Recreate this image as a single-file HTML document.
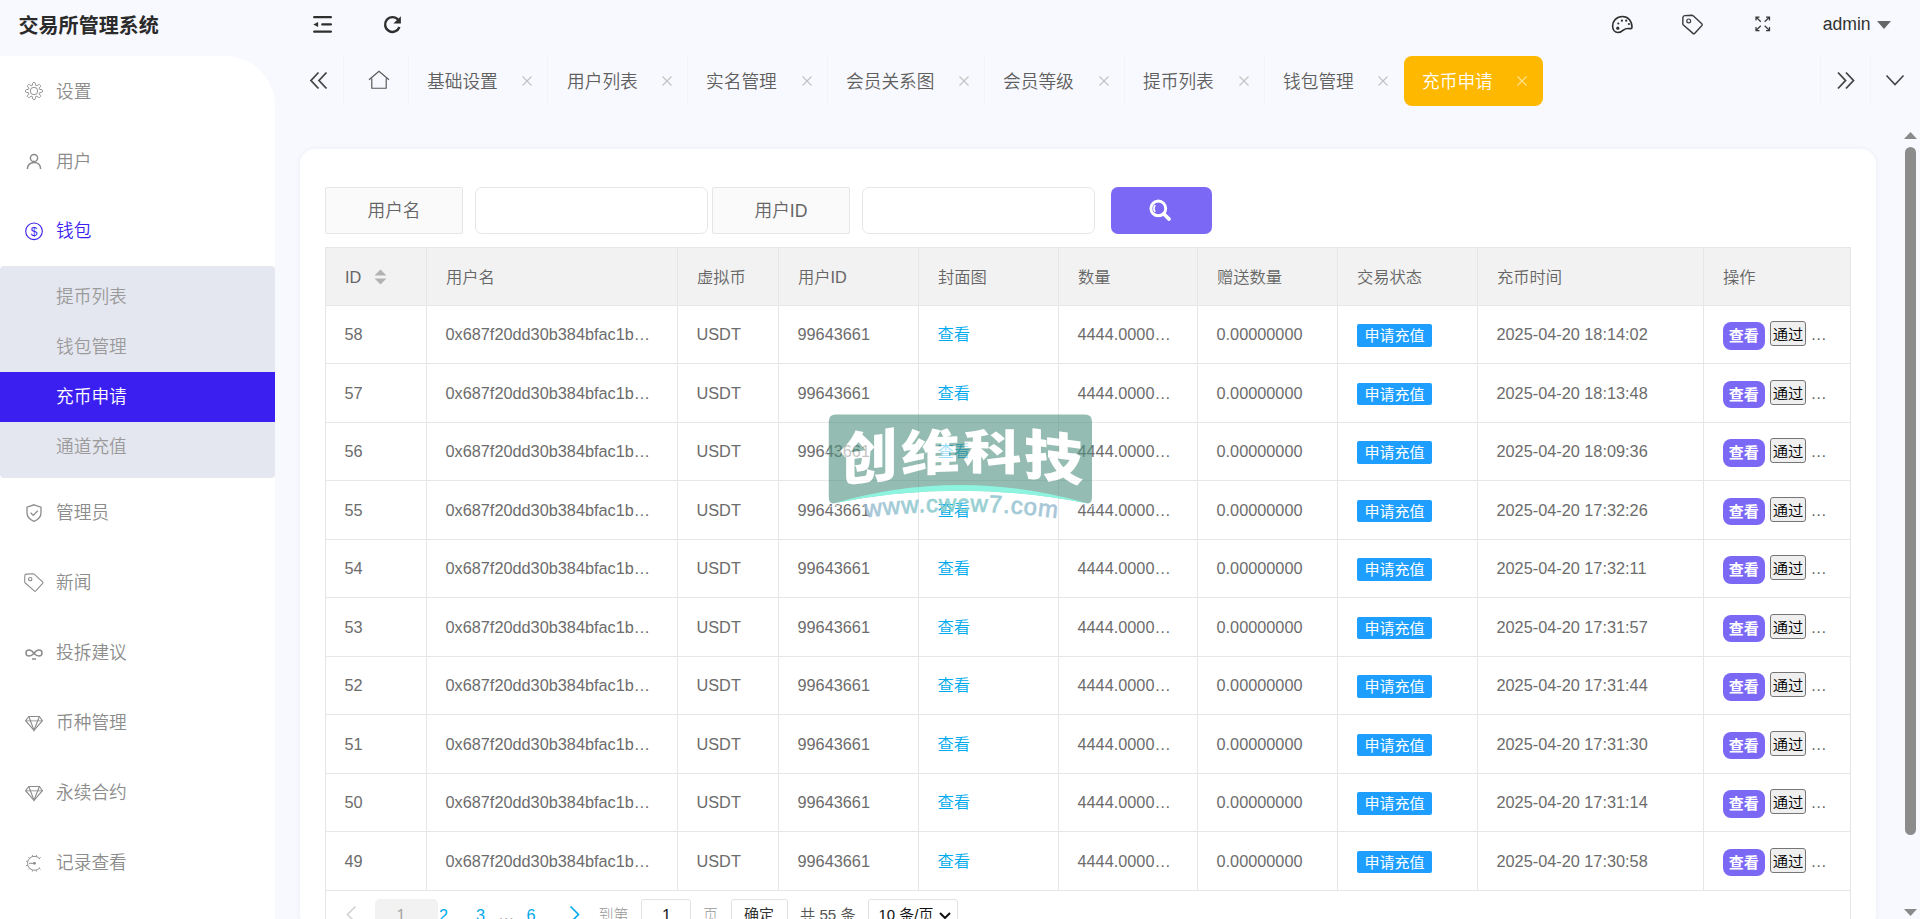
<!DOCTYPE html>
<html lang="zh-CN"><head><meta charset="utf-8"><title>交易所管理系统</title>
<style>
*{box-sizing:border-box;margin:0;padding:0}
html,body{width:1920px;height:919px;overflow:hidden}
body{background:#f8f9fe;font-family:"Liberation Sans","Noto Sans CJK SC",sans-serif;color:#666;position:relative;font-weight:350}
.abs{position:absolute}
.logo{position:absolute;left:18.5px;top:11.5px;font-size:20px;font-weight:700;color:#2b2b2b;line-height:28px;white-space:nowrap;letter-spacing:.05px}
.side{position:absolute;left:0;top:56px;width:275px;height:863px;background:#fff;border-top-right-radius:50px}
.mi{position:absolute;left:56px;font-size:17.7px;line-height:26px;color:#8c8c8c;white-space:nowrap}
.mi.on{color:#3b1ff0}
.ico{position:absolute;left:24px;width:20px;height:20px}
.sub{position:absolute;left:0;top:266px;width:275px;height:212px;background:#e5e7f0;border-radius:4px}
.sub .act{position:absolute;left:0;top:106px;width:275px;height:50px;background:#3b1ff0}
.si{position:absolute;left:56px;font-size:17.7px;line-height:26px;color:#9a9a9a;white-space:nowrap}
.si.on{color:#fff}
.hicon{position:absolute}
.tsep{position:absolute;top:56px;width:1px;height:50px;background:#f3f4f9}
.tab{position:absolute;top:69px;font-size:17.7px;line-height:26px;color:#5f5f5f;white-space:nowrap}
.tx{position:absolute;top:76px;width:10px;height:10px}
.tabon{position:absolute;left:1404px;top:56px;width:139px;height:50px;background:#ffb800;border-radius:8px}
.admin{position:absolute;left:1822.7px;top:11px;font-size:17.6px;line-height:26px;color:#333;font-weight:400}
.card{position:absolute;left:300px;top:149px;width:1576px;height:780px;background:#fff;border-radius:15px;box-shadow:0 0 5px rgba(110,110,170,.09)}
.flabel{position:absolute;top:187px;height:47px;width:138px;background:#fafafa;border:1px solid #e6e6e6;border-radius:2px;font-size:17.7px;line-height:47px;text-align:center;color:#666}
.finput{position:absolute;top:187px;height:47px;width:233px;background:#fff;border:1px solid #e6e6e6;border-radius:7px}
.fbtn{position:absolute;left:1111px;top:187px;width:101px;height:47px;background:#7b69f5;border-radius:7px}
.tbl .thead{position:absolute;left:325px;top:247px;width:1526px;height:59px;background:#f2f2f2}
.vl{position:absolute;top:247px;width:1px;height:644px;background:#e6e6e6}
.hl{position:absolute;left:325px;width:1526px;height:1px;background:#e6e6e6}
.th{position:absolute;top:263px;font-size:16.3px;line-height:28px;color:#666;white-space:nowrap}
.sort{position:absolute;left:373.5px;top:268.5px}
.td{position:absolute;font-size:16.3px;line-height:28px;height:28px;color:#6c6c6c;white-space:nowrap;font-weight:400}
.lk{color:#01aaed;font-weight:350}
.badge{position:absolute;width:75px;height:22.5px;background:#1e9fff;color:#fff;font-size:15px;line-height:23px;text-align:center;border-radius:2px;font-weight:400}
.vbtn{position:absolute;width:42.5px;height:27.4px;background:#7b69f5;color:#fff;font-size:15px;line-height:28px;text-align:center;border-radius:8px;font-weight:700}
.nbtn{position:absolute;width:36px;height:25px;background:#efefef;border:1px solid #767676;border-radius:3px;color:#000;font-size:15.3px;line-height:25px;text-align:center;font-weight:350}
.dots{position:absolute;font-size:16.3px;line-height:28px;color:#666}
.pg{position:absolute;font-size:16.3px;line-height:28px;white-space:nowrap;font-weight:400}

</style></head><body>
<div class="logo">交易所管理系统</div>
<div class="side"></div>
<div class="sub"><div class="act"></div></div>

<!-- sidebar items -->
<svg class="ico" style="top:81px" viewBox="0 0 20 20" fill="none" stroke="#8c8c8c" stroke-width=".95" stroke-linejoin="round"><circle cx="10" cy="10" r="3.700"/><path d="M8.42 4.31L8.54 2.49L9.04 1.60L10.96 1.60L11.46 2.49L11.58 4.31L12.91 4.86L14.28 3.66L15.26 3.39L16.61 4.74L16.34 5.72L15.14 7.09L15.69 8.42L17.51 8.54L18.40 9.04L18.40 10.96L17.51 11.46L15.69 11.58L15.14 12.91L16.34 14.28L16.61 15.26L15.26 16.61L14.28 16.34L12.91 15.14L11.58 15.69L11.46 17.51L10.96 18.40L9.04 18.40L8.54 17.51L8.42 15.69L7.09 15.14L5.72 16.34L4.74 16.61L3.39 15.26L3.66 14.28L4.86 12.91L4.31 11.58L2.49 11.46L1.60 10.96L1.60 9.04L2.49 8.54L4.31 8.42L4.86 7.09L3.66 5.72L3.39 4.74L4.74 3.39L5.72 3.66L7.09 4.86Z"/></svg>
<div class="mi" style="top:79px">设置</div>
<svg class="ico" style="top:151px" viewBox="0 0 20 20" fill="none" stroke="#8c8c8c" stroke-width="1.5"><circle cx="10" cy="7" r="3.6"/><path d="M3.400 18c0-4.200 3-6.600 6.600-6.600s6.600 2.400 6.600 6.600"/></svg>
<div class="mi" style="top:149px">用户</div>
<svg class="ico" style="top:221px" viewBox="0 0 20 20" fill="none" stroke="#3b1ff0" stroke-width="1.1"><circle cx="10" cy="10.300" r="8.300"/><text x="10" y="14.800" font-size="12" text-anchor="middle" fill="#3b1ff0" stroke="none" font-family="Liberation Sans, sans-serif">$</text></svg>
<div class="mi on" style="top:218px">钱包</div>

<div class="si" style="top:284px">提币列表</div>
<div class="si" style="top:334px">钱包管理</div>
<div class="si on" style="top:384px">充币申请</div>
<div class="si" style="top:434px">通道充值</div>

<svg class="ico" style="top:503px" viewBox="0 0 20 20" fill="none" stroke="#8c8c8c" stroke-width="1.300"><path d="M10 1.800l7 2.400v5.600c0 4.200-3 7-7 8.600-4-1.600-7-4.400-7-8.600V4.200z"/><path d="M6.600 9.800l2.600 2.600 4.600-4.600"/></svg>
<div class="mi" style="top:500px">管理员</div>
<svg class="ico" style="top:573px" viewBox="0 0 20 20" fill="none" stroke="#8c8c8c" stroke-width="1.150"><g transform="translate(-1 -1.300) scale(.94)"><path d="M3.800 2.600L10.800 2.200Q11.600 2.200 12.200 2.800L20.800 10.800Q21.600 11.600 20.900 12.500L13.600 20.400Q12.800 21.200 12 20.400L2.400 12Q1.800 11.500 1.800 10.700L1.900 4.400Q2 2.700 3.800 2.600Z" stroke-linejoin="round"/><circle cx="7.700" cy="7.900" r="1.800"/></g></svg>
<div class="mi" style="top:570px">新闻</div>
<svg class="ico" style="top:643px" viewBox="0 0 20 20" fill="none" stroke="#8c8c8c" stroke-width="1.500"><path d="M10 10.500c-1.500-2.500-3-3.500-5-3.500a3 3 0 0 0 0 6c2 0 3.500-1 5-2.500zm0 0c1.500-2.500 3-3.500 5-3.500a3 3 0 0 1 0 6c-2 0-3.500-1-5-2.500z"/><path d="M8 16h4"/></svg>
<div class="mi" style="top:640px">投拆建议</div>
<svg class="ico" style="top:713px" viewBox="0 0 20 20" fill="none" stroke="#8c8c8c" stroke-width="1.100"><path d="M4.800 3.500h10.600l3 4.200-8.400 9.600L1.600 7.700z"/><path d="M1.600 7.700h16.800" stroke-opacity=".55" stroke-width="1.600"/><path d="M4.800 3.500l5.200 13.800 5.400-13.800"/></svg>
<div class="mi" style="top:710px">币种管理</div>
<svg class="ico" style="top:783px" viewBox="0 0 20 20" fill="none" stroke="#8c8c8c" stroke-width="1.100"><path d="M4.800 3.500h10.600l3 4.200-8.400 9.600L1.600 7.700z"/><path d="M1.600 7.700h16.800" stroke-opacity=".55" stroke-width="1.600"/><path d="M4.800 3.500l5.200 13.800 5.400-13.800"/></svg>
<div class="mi" style="top:780px">永续合约</div>
<svg class="ico" style="top:853px" viewBox="0 0 20 20" fill="none" stroke="#8c8c8c" stroke-width="1"><path d="M16.02 14.61A7.0 7.0 0 1 1 16.02 5.99"/><path d="M15.66 15.46L16.65 16.45M12.39 17.35L12.75 18.70M8.61 17.35L8.25 18.70M5.34 15.46L4.35 16.45M3.45 12.19L2.10 12.55M3.45 8.41L2.10 8.05M5.34 5.14L4.35 4.15M8.61 3.25L8.25 1.90M12.39 3.25L12.75 1.90M15.66 5.14L16.65 4.15" stroke-width=".9"/><circle cx="10.500" cy="10.300" r="1.400" fill="#8c8c8c" stroke="none"/><path d="M5 10.300h5.500"/></svg>
<div class="mi" style="top:850px">记录查看</div>

<!-- header icons -->
<svg class="hicon" style="left:312px;top:15px" width="21" height="19" viewBox="0 0 21 19"><path d="M2.200 2.200h16.700M10.300 9.450h8.600M2.200 16.700h16.700" stroke="#2f2f2f" stroke-width="2.300" stroke-linecap="round" fill="none"/><path d="M6.100 6.900v5.100L1.300 9.450z" fill="#2f2f2f"/></svg>
<svg class="hicon" style="left:383px;top:15px" width="20" height="19" viewBox="0 0 20 19"><path d="M15.170 4.740A7.400 7.400 0 1 0 16.450 12.030" fill="none" stroke="#2f2f2f" stroke-width="2.400"/><path d="M17.900 1.250v7.150h-7.500z" fill="#2f2f2f"/></svg>

<!-- tabs -->
<i class="tsep" style="left:343px"></i><i class="tsep" style="left:408px"></i>
<i class="tsep" style="left:547px"></i><i class="tsep" style="left:687px"></i><i class="tsep" style="left:827px"></i><i class="tsep" style="left:984px"></i><i class="tsep" style="left:1124px"></i><i class="tsep" style="left:1264px"></i>
<i class="tsep" style="left:1820px"></i><i class="tsep" style="left:1870px"></i>
<svg class="hicon" style="left:309px;top:71px" width="20" height="19" viewBox="0 0 20 19"><path d="M9.500 1.500L2 9.500l7.500 8M17.500 1.500L10 9.500l7.500 8" fill="none" stroke="#444" stroke-width="1.800"/></svg>
<svg class="hicon" style="left:368px;top:70px" width="22" height="20" viewBox="0 0 22 20"><path d="M1 9.800L11 1.200l10 8.600M3.800 8.600v9.600h14.400V8.600" fill="none" stroke="#555" stroke-width="1.150"/></svg>
<div class="tabon"></div>
<div class="tab" style="left:427px">基础设置</div>
<div class="tab" style="left:567px">用户列表</div>
<div class="tab" style="left:706px">实名管理</div>
<div class="tab" style="left:846px">会员关系图</div>
<div class="tab" style="left:1003px">会员等级</div>
<div class="tab" style="left:1143px">提币列表</div>
<div class="tab" style="left:1283px">钱包管理</div>
<div class="tab" style="left:1422px;color:#fff">充币申请</div>
<svg class="tx" style="left:522px" viewBox="0 0 10 10"><path d="M.5.500l9 9M9.500.500l-9 9" stroke="#c2c2c2" stroke-width="1.100"/></svg>
<svg class="tx" style="left:662px" viewBox="0 0 10 10"><path d="M.5.500l9 9M9.500.500l-9 9" stroke="#c2c2c2" stroke-width="1.100"/></svg>
<svg class="tx" style="left:802px" viewBox="0 0 10 10"><path d="M.5.500l9 9M9.500.500l-9 9" stroke="#c2c2c2" stroke-width="1.100"/></svg>
<svg class="tx" style="left:959px" viewBox="0 0 10 10"><path d="M.5.500l9 9M9.500.500l-9 9" stroke="#c2c2c2" stroke-width="1.100"/></svg>
<svg class="tx" style="left:1099px" viewBox="0 0 10 10"><path d="M.5.500l9 9M9.500.500l-9 9" stroke="#c2c2c2" stroke-width="1.100"/></svg>
<svg class="tx" style="left:1239px" viewBox="0 0 10 10"><path d="M.5.500l9 9M9.500.500l-9 9" stroke="#c2c2c2" stroke-width="1.100"/></svg>
<svg class="tx" style="left:1378px" viewBox="0 0 10 10"><path d="M.5.500l9 9M9.500.500l-9 9" stroke="#c2c2c2" stroke-width="1.100"/></svg>
<svg class="tx" style="left:1517px" viewBox="0 0 10 10"><path d="M.5.500l9 9M9.500.500l-9 9" stroke="#ffe39a" stroke-width="1.100"/></svg>
<svg class="hicon" style="left:1836px;top:71px" width="20" height="19" viewBox="0 0 20 19"><path d="M2 1.500l7.500 8-7.500 8M10 1.500l7.500 8-7.500 8" fill="none" stroke="#444" stroke-width="1.800"/></svg>
<svg class="hicon" style="left:1885px;top:74px" width="20" height="13" viewBox="0 0 20 13"><path d="M1.500 1.500L10 10.500l8.500-9" fill="none" stroke="#444" stroke-width="1.600"/></svg>

<!-- right header icons -->
<svg class="hicon" style="left:1611px;top:15px" width="23" height="20" viewBox="0 0 23 20"><path d="M21 12.300C21 6 17 1.500 11.500 1.500C5.500 1.500 1.600 6 1.600 11C1.600 15 4 17.500 7 17.500C10 17.500 11.500 16 12.800 14.800C14.500 13.200 17 13.300 19 13.600C20.500 13.800 21 13.300 21 12.300Z" fill="none" stroke="#2f2f2f" stroke-width="1.600"/><circle cx="6.800" cy="13.200" r="1.600" fill="#2f2f2f"/><circle cx="7.300" cy="8.500" r="1.100" fill="#2f2f2f"/><circle cx="10.900" cy="5.700" r="1.100" fill="#2f2f2f"/><circle cx="15.200" cy="5.700" r="1.100" fill="#2f2f2f"/><circle cx="17.900" cy="9" r="1.100" fill="#2f2f2f"/></svg>
<svg class="hicon" style="left:1681px;top:13px" width="24" height="23" viewBox="0 0 24 23"><path d="M3.800 2.600L10.800 2.200Q11.600 2.200 12.200 2.800L20.800 10.800Q21.600 11.600 20.900 12.500L13.600 20.400Q12.800 21.200 12 20.400L2.400 12Q1.800 11.500 1.800 10.700L1.900 4.400Q2 2.700 3.800 2.600Z" fill="none" stroke="#3a3a3a" stroke-width="1.400" stroke-linejoin="round"/><circle cx="7.700" cy="7.900" r="1.900" fill="none" stroke="#3a3a3a" stroke-width="1.200"/></svg>
<svg class="hicon" style="left:1754.500px;top:16px" width="16" height="16" viewBox="0 0 16 16"><path d="M1 4.500V1h3.500M1 1l4.800 4.800M11 1h3.500v3.500M14.500 1L9.700 5.800M1 11v3.500h3.500M1 14.500l4.800-4.800M14.500 11v3.500H11M14.500 14.500L9.700 9.700" fill="none" stroke="#3a3a3a" stroke-width="1.250"/></svg>
<div class="admin">admin</div>
<svg class="hicon" style="left:1877px;top:20.500px" width="14" height="8" viewBox="0 0 14 8"><path d="M0 0h14L7 8z" fill="#666"/></svg>

<!-- scrollbar -->
<svg class="hicon" style="left:1904px;top:131px" width="13" height="8" viewBox="0 0 13 8"><path d="M0 8h13L6.500 1z" fill="#8a8a8a"/></svg>
<div class="abs" style="left:1905px;top:147px;width:11px;height:688px;background:#8c8c8c;border-radius:6px"></div>
<svg class="hicon" style="left:1904px;top:909px" width="13" height="8" viewBox="0 0 13 8"><path d="M0 0h13L6.500 7z" fill="#8a8a8a"/></svg>

<!-- card + form -->
<div class="card"></div>
<div class="flabel" style="left:325px">用户名</div>
<div class="finput" style="left:475px"></div>
<div class="flabel" style="left:712px">用户ID</div>
<div class="finput" style="left:862px"></div>
<div class="fbtn"><svg style="position:absolute;left:36px;top:10px" width="26" height="26" viewBox="0 0 26 26"><circle cx="11.300" cy="11.400" r="7.400" fill="none" stroke="#fff" stroke-width="2.900"/><path d="M16.900 17l5.200 5.100" stroke="#fff" stroke-width="3.600" stroke-linecap="round"/><path d="M8.300 14.600a4.400 4.400 0 0 1 0-6.400" fill="none" stroke="#fff" stroke-width="1.700"/></svg></div>
<div class="tbl">
<div class="thead"></div>
<i class="vl" style="left:325px;height:680px"></i>
<i class="vl" style="left:426px;height:644px"></i>
<i class="vl" style="left:677px;height:644px"></i>
<i class="vl" style="left:778px;height:644px"></i>
<i class="vl" style="left:918px;height:644px"></i>
<i class="vl" style="left:1058px;height:644px"></i>
<i class="vl" style="left:1197px;height:644px"></i>
<i class="vl" style="left:1337px;height:644px"></i>
<i class="vl" style="left:1477px;height:644px"></i>
<i class="vl" style="left:1703px;height:644px"></i>
<i class="vl" style="left:1850px;height:680px"></i>
<i class="hl" style="top:247px"></i>
<i class="hl" style="top:305px"></i>
<i class="hl" style="top:363px"></i>
<i class="hl" style="top:422px"></i>
<i class="hl" style="top:480px"></i>
<i class="hl" style="top:539px"></i>
<i class="hl" style="top:597px"></i>
<i class="hl" style="top:656px"></i>
<i class="hl" style="top:714px"></i>
<i class="hl" style="top:773px"></i>
<i class="hl" style="top:831px"></i>
<i class="hl" style="top:890px"></i>
<span class="th" style="left:345px">ID</span>
<span class="th" style="left:446px">用户名</span>
<span class="th" style="left:697px">虚拟币</span>
<span class="th" style="left:798px">用户ID</span>
<span class="th" style="left:938px">封面图</span>
<span class="th" style="left:1078px">数量</span>
<span class="th" style="left:1217px">赠送数量</span>
<span class="th" style="left:1357px">交易状态</span>
<span class="th" style="left:1497px">充币时间</span>
<span class="th" style="left:1723px">操作</span>
<svg class="sort" width="13" height="16" viewBox="0 0 12 16" preserveAspectRatio="none"><path d="M6 0.5 L11.5 6.5 H0.5 Z M6 15.5 L11.5 9.5 H0.5 Z" fill="#b2b2b2"/></svg>
<span class="td " style="left:344.5px;top:320px;width:62px">58</span>
<span class="td " style="left:445.5px;top:320px;width:212px">0x687f20dd30b384bfac1b…</span>
<span class="td " style="left:696.5px;top:320px;width:62px">USDT</span>
<span class="td " style="left:797.5px;top:320px;width:101px">99643661</span>
<span class="td " style="left:937.5px;top:320px;width:101px"><a class="lk">查看</a></span>
<span class="td " style="left:1077.5px;top:320px;width:100px">4444.0000…</span>
<span class="td " style="left:1216.5px;top:320px;width:101px">0.00000000</span>
<span class="badge" style="left:1357px;top:324.30px">申请充值</span>
<span class="td " style="left:1496.5px;top:320px;width:187px">2025-04-20 18:14:02</span>
<span class="vbtn" style="left:1722.5px;top:322.30px">查看</span>
<span class="nbtn" style="left:1770px;top:321.30px">通过</span>
<span class="dots" style="left:1810.5px;top:320px">…</span>
<span class="td " style="left:344.5px;top:379px;width:62px">57</span>
<span class="td " style="left:445.5px;top:379px;width:212px">0x687f20dd30b384bfac1b…</span>
<span class="td " style="left:696.5px;top:379px;width:62px">USDT</span>
<span class="td " style="left:797.5px;top:379px;width:101px">99643661</span>
<span class="td " style="left:937.5px;top:379px;width:101px"><a class="lk">查看</a></span>
<span class="td " style="left:1077.5px;top:379px;width:100px">4444.0000…</span>
<span class="td " style="left:1216.5px;top:379px;width:101px">0.00000000</span>
<span class="badge" style="left:1357px;top:382.80px">申请充值</span>
<span class="td " style="left:1496.5px;top:379px;width:187px">2025-04-20 18:13:48</span>
<span class="vbtn" style="left:1722.5px;top:380.80px">查看</span>
<span class="nbtn" style="left:1770px;top:379.80px">通过</span>
<span class="dots" style="left:1810.5px;top:379px">…</span>
<span class="td " style="left:344.5px;top:437px;width:62px">56</span>
<span class="td " style="left:445.5px;top:437px;width:212px">0x687f20dd30b384bfac1b…</span>
<span class="td " style="left:696.5px;top:437px;width:62px">USDT</span>
<span class="td " style="left:797.5px;top:437px;width:101px">99643661</span>
<span class="td " style="left:937.5px;top:437px;width:101px"><a class="lk">查看</a></span>
<span class="td " style="left:1077.5px;top:437px;width:100px">4444.0000…</span>
<span class="td " style="left:1216.5px;top:437px;width:101px">0.00000000</span>
<span class="badge" style="left:1357px;top:441.30px">申请充值</span>
<span class="td " style="left:1496.5px;top:437px;width:187px">2025-04-20 18:09:36</span>
<span class="vbtn" style="left:1722.5px;top:439.30px">查看</span>
<span class="nbtn" style="left:1770px;top:438.30px">通过</span>
<span class="dots" style="left:1810.5px;top:437px">…</span>
<span class="td " style="left:344.5px;top:496px;width:62px">55</span>
<span class="td " style="left:445.5px;top:496px;width:212px">0x687f20dd30b384bfac1b…</span>
<span class="td " style="left:696.5px;top:496px;width:62px">USDT</span>
<span class="td " style="left:797.5px;top:496px;width:101px">99643661</span>
<span class="td " style="left:937.5px;top:496px;width:101px"><a class="lk">查看</a></span>
<span class="td " style="left:1077.5px;top:496px;width:100px">4444.0000…</span>
<span class="td " style="left:1216.5px;top:496px;width:101px">0.00000000</span>
<span class="badge" style="left:1357px;top:499.80px">申请充值</span>
<span class="td " style="left:1496.5px;top:496px;width:187px">2025-04-20 17:32:26</span>
<span class="vbtn" style="left:1722.5px;top:497.80px">查看</span>
<span class="nbtn" style="left:1770px;top:496.80px">通过</span>
<span class="dots" style="left:1810.5px;top:496px">…</span>
<span class="td " style="left:344.5px;top:554px;width:62px">54</span>
<span class="td " style="left:445.5px;top:554px;width:212px">0x687f20dd30b384bfac1b…</span>
<span class="td " style="left:696.5px;top:554px;width:62px">USDT</span>
<span class="td " style="left:797.5px;top:554px;width:101px">99643661</span>
<span class="td " style="left:937.5px;top:554px;width:101px"><a class="lk">查看</a></span>
<span class="td " style="left:1077.5px;top:554px;width:100px">4444.0000…</span>
<span class="td " style="left:1216.5px;top:554px;width:101px">0.00000000</span>
<span class="badge" style="left:1357px;top:558.30px">申请充值</span>
<span class="td " style="left:1496.5px;top:554px;width:187px">2025-04-20 17:32:11</span>
<span class="vbtn" style="left:1722.5px;top:556.30px">查看</span>
<span class="nbtn" style="left:1770px;top:555.30px">通过</span>
<span class="dots" style="left:1810.5px;top:554px">…</span>
<span class="td " style="left:344.5px;top:613px;width:62px">53</span>
<span class="td " style="left:445.5px;top:613px;width:212px">0x687f20dd30b384bfac1b…</span>
<span class="td " style="left:696.5px;top:613px;width:62px">USDT</span>
<span class="td " style="left:797.5px;top:613px;width:101px">99643661</span>
<span class="td " style="left:937.5px;top:613px;width:101px"><a class="lk">查看</a></span>
<span class="td " style="left:1077.5px;top:613px;width:100px">4444.0000…</span>
<span class="td " style="left:1216.5px;top:613px;width:101px">0.00000000</span>
<span class="badge" style="left:1357px;top:616.80px">申请充值</span>
<span class="td " style="left:1496.5px;top:613px;width:187px">2025-04-20 17:31:57</span>
<span class="vbtn" style="left:1722.5px;top:614.80px">查看</span>
<span class="nbtn" style="left:1770px;top:613.80px">通过</span>
<span class="dots" style="left:1810.5px;top:613px">…</span>
<span class="td " style="left:344.5px;top:671px;width:62px">52</span>
<span class="td " style="left:445.5px;top:671px;width:212px">0x687f20dd30b384bfac1b…</span>
<span class="td " style="left:696.5px;top:671px;width:62px">USDT</span>
<span class="td " style="left:797.5px;top:671px;width:101px">99643661</span>
<span class="td " style="left:937.5px;top:671px;width:101px"><a class="lk">查看</a></span>
<span class="td " style="left:1077.5px;top:671px;width:100px">4444.0000…</span>
<span class="td " style="left:1216.5px;top:671px;width:101px">0.00000000</span>
<span class="badge" style="left:1357px;top:675.30px">申请充值</span>
<span class="td " style="left:1496.5px;top:671px;width:187px">2025-04-20 17:31:44</span>
<span class="vbtn" style="left:1722.5px;top:673.30px">查看</span>
<span class="nbtn" style="left:1770px;top:672.30px">通过</span>
<span class="dots" style="left:1810.5px;top:671px">…</span>
<span class="td " style="left:344.5px;top:730px;width:62px">51</span>
<span class="td " style="left:445.5px;top:730px;width:212px">0x687f20dd30b384bfac1b…</span>
<span class="td " style="left:696.5px;top:730px;width:62px">USDT</span>
<span class="td " style="left:797.5px;top:730px;width:101px">99643661</span>
<span class="td " style="left:937.5px;top:730px;width:101px"><a class="lk">查看</a></span>
<span class="td " style="left:1077.5px;top:730px;width:100px">4444.0000…</span>
<span class="td " style="left:1216.5px;top:730px;width:101px">0.00000000</span>
<span class="badge" style="left:1357px;top:733.80px">申请充值</span>
<span class="td " style="left:1496.5px;top:730px;width:187px">2025-04-20 17:31:30</span>
<span class="vbtn" style="left:1722.5px;top:731.80px">查看</span>
<span class="nbtn" style="left:1770px;top:730.80px">通过</span>
<span class="dots" style="left:1810.5px;top:730px">…</span>
<span class="td " style="left:344.5px;top:788px;width:62px">50</span>
<span class="td " style="left:445.5px;top:788px;width:212px">0x687f20dd30b384bfac1b…</span>
<span class="td " style="left:696.5px;top:788px;width:62px">USDT</span>
<span class="td " style="left:797.5px;top:788px;width:101px">99643661</span>
<span class="td " style="left:937.5px;top:788px;width:101px"><a class="lk">查看</a></span>
<span class="td " style="left:1077.5px;top:788px;width:100px">4444.0000…</span>
<span class="td " style="left:1216.5px;top:788px;width:101px">0.00000000</span>
<span class="badge" style="left:1357px;top:792.30px">申请充值</span>
<span class="td " style="left:1496.5px;top:788px;width:187px">2025-04-20 17:31:14</span>
<span class="vbtn" style="left:1722.5px;top:790.30px">查看</span>
<span class="nbtn" style="left:1770px;top:789.30px">通过</span>
<span class="dots" style="left:1810.5px;top:788px">…</span>
<span class="td " style="left:344.5px;top:847px;width:62px">49</span>
<span class="td " style="left:445.5px;top:847px;width:212px">0x687f20dd30b384bfac1b…</span>
<span class="td " style="left:696.5px;top:847px;width:62px">USDT</span>
<span class="td " style="left:797.5px;top:847px;width:101px">99643661</span>
<span class="td " style="left:937.5px;top:847px;width:101px"><a class="lk">查看</a></span>
<span class="td " style="left:1077.5px;top:847px;width:100px">4444.0000…</span>
<span class="td " style="left:1216.5px;top:847px;width:101px">0.00000000</span>
<span class="badge" style="left:1357px;top:850.80px">申请充值</span>
<span class="td " style="left:1496.5px;top:847px;width:187px">2025-04-20 17:30:58</span>
<span class="vbtn" style="left:1722.5px;top:848.80px">查看</span>
<span class="nbtn" style="left:1770px;top:847.80px">通过</span>
<span class="dots" style="left:1810.5px;top:847px">…</span>
</div><div class="pgwrap">
<svg class="hicon" style="left:346px;top:906px" width="11" height="14" viewBox="0 0 11 14"><path d="M9.500 0.500L1.500 8.500l8 8" fill="none" stroke="#d2d2d2" stroke-width="1.600"/></svg>
<div class="abs" style="left:375px;top:899px;width:63px;height:30px;background:#f2f2f2;border-radius:5px"></div>
<span class="pg" style="left:396.500px;top:900.500px;color:#a6a6a6">1</span>
<span class="pg" style="left:439px;top:900.500px;color:#01aaed">2</span>
<span class="pg" style="left:476px;top:900.500px;color:#01aaed">3</span>
<span class="pg" style="left:498px;top:899.500px;color:#999">…</span>
<span class="pg" style="left:526.500px;top:900.500px;color:#01aaed">6</span>
<svg class="hicon" style="left:569px;top:906px" width="11" height="14" viewBox="0 0 11 14"><path d="M1.500 0.500l8 8-8 8" fill="none" stroke="#01aaed" stroke-width="1.600"/></svg>
<span class="pg" style="left:598.500px;top:900.500px;color:#999;font-size:15px;font-weight:300">到第</span>
<div class="abs" style="left:641px;top:899px;width:50px;height:30px;background:#fff;border:1px solid #e2e2e2;border-radius:3px"></div>
<span class="pg" style="left:662px;top:900.500px;color:#222">1</span>
<span class="pg" style="left:703px;top:900.500px;color:#999;font-size:15px;font-weight:300">页</span>
<div class="abs" style="left:731px;top:899px;width:57px;height:30px;background:#fff;border:1px solid #e2e2e2;border-radius:3px"></div>
<span class="pg" style="left:744px;top:900.500px;color:#333;font-size:15px">确定</span>
<span class="pg" style="left:800px;top:900.500px;color:#555;font-weight:350;font-size:15.200px">共 55 条</span>
<div class="abs" style="left:868px;top:899px;width:90px;height:30px;background:#fff;border:1px solid #e2e2e2;border-radius:3px"></div>
<span class="pg" style="left:878.500px;top:900.500px;color:#111;font-size:15px;font-weight:350">10 条/页</span>
<svg class="hicon" style="left:939px;top:912px" width="12" height="8" viewBox="0 0 12 8"><path d="M1 1l5 5 5-5" fill="none" stroke="#111" stroke-width="2"/></svg>
</div>
<svg class="hicon" style="left:820px;top:405px" width="290" height="125" viewBox="0 0 290 125">
<defs><linearGradient id="wmg" x1="0" y1="0" x2="1" y2="0"><stop offset="0" stop-color="#9dbbd2"/><stop offset=".45" stop-color="#7fcdc9"/><stop offset="1" stop-color="#9dbbd2"/></linearGradient></defs>
<path d="M12.500 6.500H268.500Q275 6.500 275 13V96Q275 103 268 101Q140 64 15 101Q6 103 6 96V13Q6 6.500 12.500 6.500Z" fill="none" stroke="#fff" stroke-opacity=".75" stroke-width="1"/>
<g opacity=".6">
<path d="M15.750 9.500H265Q272 9.500 272 16.500V92Q272 100 265.500 98Q140 73 15.250 98Q8.750 100 8.750 92V16.500Q8.750 9.500 15.750 9.500Z" fill="#50917f"/>
<path d="M13 98.400Q140 61.500 267.800 98.400Q140 73.200 13 98.400Z" fill="#43eecb"/>
<g font-family="Noto Sans CJK SC, sans-serif" font-weight="900" font-size="58" fill="#fff">
<text transform="translate(18.500 76.800) skewY(-7) scale(1.02 .985)">创</text>
<text transform="translate(81 66.500) skewY(-2) scale(1.01 .845)">维</text>
<text transform="translate(143 63.700) skewY(1.500) scale(1.01 .82)">科</text>
<text transform="translate(204 68.800) skewY(7) scale(1.02 .94)">技</text>
</g>
</g>
<path id="wmc" d="M45.500 112.500Q142 100 240 113.500" fill="none"/>
<text font-family="Liberation Sans, sans-serif" font-weight="400" font-size="24" fill="url(#wmg)" stroke="url(#wmg)" stroke-width=".7" letter-spacing=".9" opacity=".85"><textPath href="#wmc" startOffset="0">www.cwcw7.com</textPath></text>
</svg>

</body></html>
